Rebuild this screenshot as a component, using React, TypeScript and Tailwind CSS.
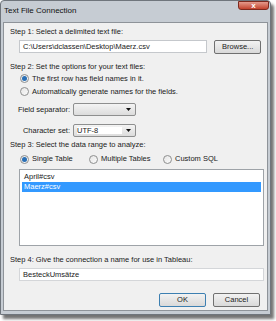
import React from "react";

const font = { fontFamily: '"Liberation Sans", Arial, sans-serif' };

function Radio({ checked, label }: { checked?: boolean; label: string }) {
  return (
    <div className="flex items-center gap-[3px]">
      <span className="w-[9px] h-[9px] rounded-full border border-[#8e8f8f] bg-gradient-to-br from-[#e6e6e6] to-[#fafafa] flex items-center justify-center">
        {checked && <span className="w-[5px] h-[5px] rounded-full bg-[#2a6fb5]" />}
      </span>
      <span>{label}</span>
    </div>
  );
}

function Select({ value }: { value?: string }) {
  return (
    <div className="w-[63px] h-[13px] border border-[#8e8f8f] rounded-[2px] bg-gradient-to-b from-[#f4f4f4] to-[#dcdcdc] flex items-center justify-between pl-[3px] pr-[4px]">
      <span className={value ? "bg-white pr-[24px]" : ""}>{value}</span>
      <svg width="5" height="3" viewBox="0 0 5 3">
        <path d="M0 0h5L2.5 3z" fill="#111" />
      </svg>
    </div>
  );
}

function Button({ label, focus }: { label: string; focus?: boolean }) {
  return (
    <div
      className={`w-[47px] h-[14px] rounded-[2px] border ${
        focus ? "border-[#3c7fb1]" : "border-[#707070]"
      } bg-gradient-to-b from-[#f2f2f2] to-[#d9d9d9] flex items-center justify-center`}
    >
      {label}
    </div>
  );
}

export default function App() {
  return (
    <div className="w-[276px] h-[321px] bg-white text-[7.5px] leading-none text-[#1a1a1a]" style={font}>
      <div className="relative w-[271px] h-[315px] bg-[#c6ccd3] border border-[#6f757c] rounded-t-[4px] shadow-[3px_4px_3px_rgba(0,0,0,0.55)] flex flex-col">
        <div className="h-[21px] flex items-start pt-[6px] pl-[3px] text-[8px] text-[#111]">
          Text File Connection
        </div>
        <div className="absolute right-[1px] top-0 w-[31px] h-[9px] rounded-b-[3px] bg-gradient-to-b from-[#e49a8c] to-[#c2412c] border border-[#7d2a1e] flex items-center justify-center text-white text-[8px] font-bold">
          x
        </div>
        <div className="flex-1 mx-[2px] mb-[3px] bg-[#f0f0f0] border border-[#8e9399] flex flex-col px-[6px] pt-[5px]">
          <div>Step 1: Select a delimited text file:</div>
          <div className="flex items-center mt-[4px] pl-[9px] gap-[7px]">
            <div className="w-[190px] h-[13px] bg-white border border-[#c5c8cc] flex items-center pl-[3px]">
              C:\Users\dclassen\Desktop\Maerz.csv
            </div>
            <Button label="Browse..." />
          </div>
          <div className="mt-[9px]">Step 2: Set the options for your text files:</div>
          <div className="pl-[10px] mt-[4px] flex flex-col gap-[4px]">
            <Radio checked label="The first row has field names in it." />
            <Radio label="Automatically generate names for the fields." />
          </div>
          <div className="flex items-center mt-[7px] gap-[3px]">
            <span className="w-[60px] text-right">Field separator:</span>
            <Select />
          </div>
          <div className="flex items-center mt-[8px] gap-[3px]">
            <span className="w-[60px] text-right">Character set:</span>
            <Select value="UTF-8" />
          </div>
          <div className="mt-[4px]">Step 3: Select the data range to analyze:</div>
          <div className="flex items-center mt-[6px] pl-[10px]">
            <div className="w-[69px]">
              <Radio checked label="Single Table" />
            </div>
            <div className="w-[74px]">
              <Radio label="Multiple Tables" />
            </div>
            <Radio label="Custom SQL" />
          </div>
          <div className="ml-[9px] mt-[5px] w-[245px] h-[77px] bg-white border border-[#9ea3a8] px-[2px] pt-[2px]">
            <div className="h-[10px] flex items-center pl-[2px]">April#csv</div>
            <div className="h-[10px] flex items-center pl-[2px] bg-[#3399ff] text-white">Maerz#csv</div>
          </div>
          <div className="mt-[10px]">Step 4: Give the connection a name for use in Tableau:</div>
          <div className="ml-[9px] mt-[5px] w-[245px] h-[13px] bg-white border border-[#d4d6d9] flex items-center pl-[3px]">
            BesteckUmsätze
          </div>
          <div className="flex justify-end gap-[7px] mt-[12px] pr-[1px]">
            <Button label="OK" focus />
            <Button label="Cancel" />
          </div>
        </div>
      </div>
    </div>
  );
}
